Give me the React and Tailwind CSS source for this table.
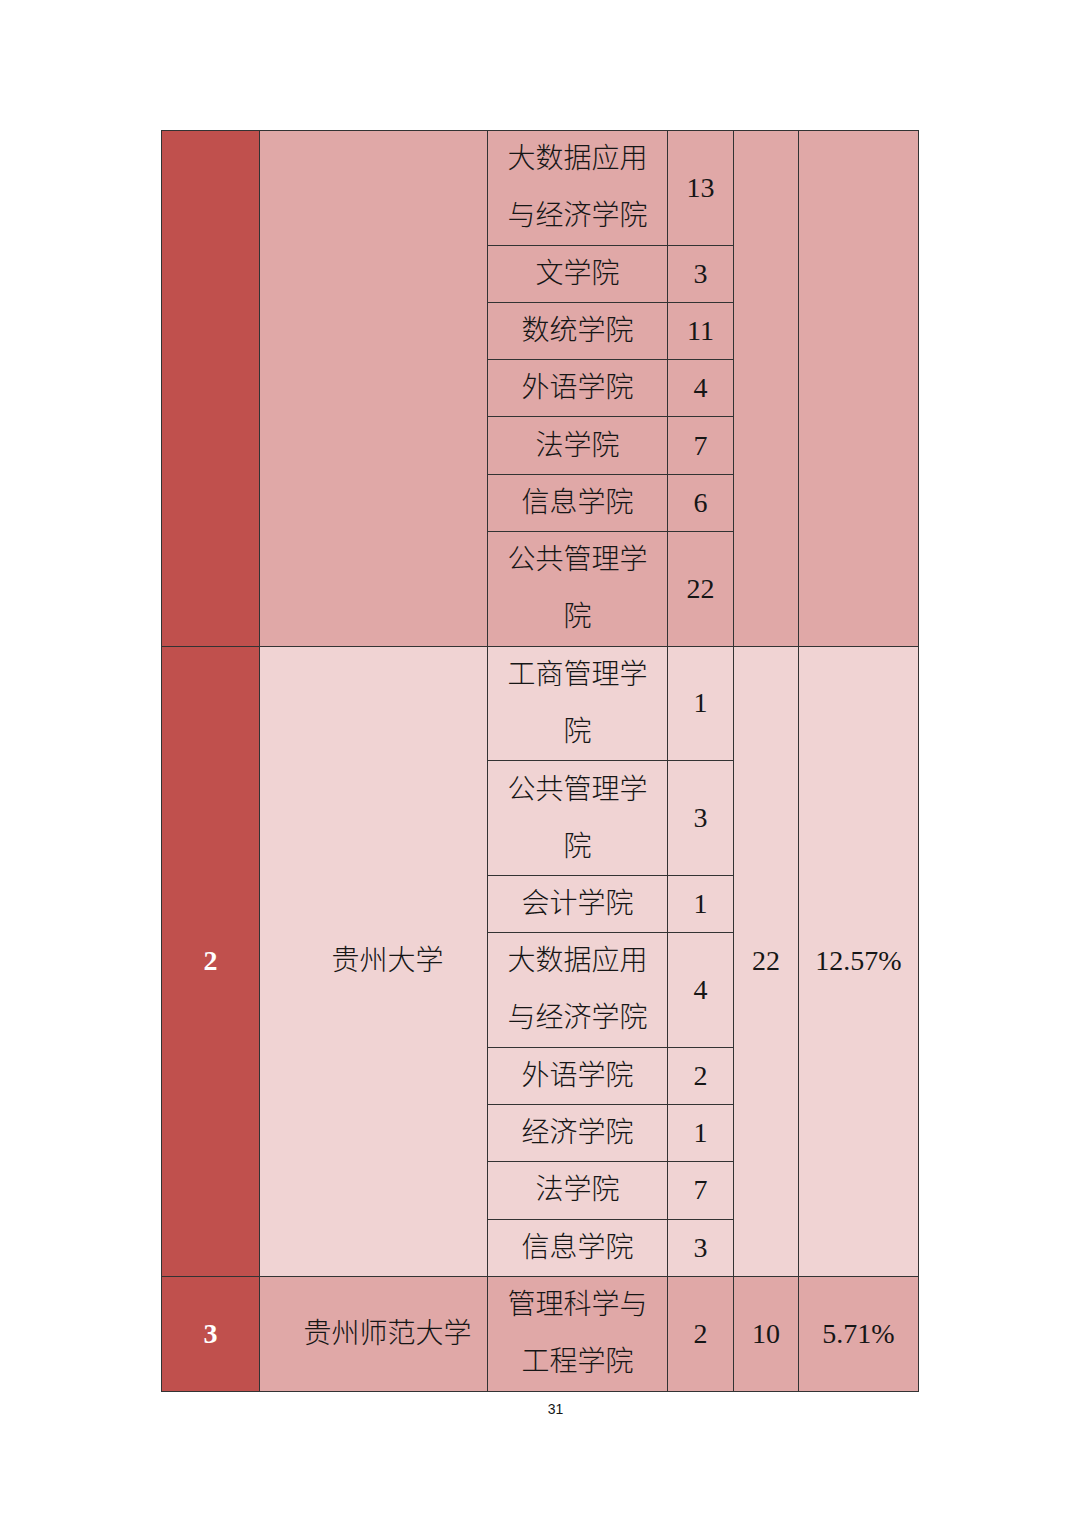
const SERIF = { fontFamily: '"Liberation Serif", "Noto Sans CJK SC", serif' };

// 表格数据：每组一所学校
const groups = [
  {
    no: "",
    school: "",
    total: "",
    ratio: "",
    bg: "bg-[#e0a8a7]",
    rows: [
      { dept: ["大数据应用", "与经济学院"], n: "13" },
      { dept: ["文学院"], n: "3" },
      { dept: ["数统学院"], n: "11" },
      { dept: ["外语学院"], n: "4" },
      { dept: ["法学院"], n: "7" },
      { dept: ["信息学院"], n: "6" },
      { dept: ["公共管理学", "院"], n: "22" },
    ],
  },
  {
    no: "2",
    school: "贵州大学",
    total: "22",
    ratio: "12.57%",
    bg: "bg-[#f0d3d3]",
    rows: [
      { dept: ["工商管理学", "院"], n: "1" },
      { dept: ["公共管理学", "院"], n: "3" },
      { dept: ["会计学院"], n: "1" },
      { dept: ["大数据应用", "与经济学院"], n: "4" },
      { dept: ["外语学院"], n: "2" },
      { dept: ["经济学院"], n: "1" },
      { dept: ["法学院"], n: "7" },
      { dept: ["信息学院"], n: "3" },
    ],
  },
  {
    no: "3",
    school: "贵州师范大学",
    total: "10",
    ratio: "5.71%",
    bg: "bg-[#e0a8a7]",
    rows: [{ dept: ["管理科学与", "工程学院"], n: "2" }],
  },
];

const cell = "border border-[#333] p-0 text-center align-middle";

function App() {
  return (
    <div className="w-[1080px] h-[1527px] bg-white text-[#161616]" style={SERIF}>
      <div className="pt-[130px] pl-[161px]">
        <table className="border-collapse table-fixed w-[757px] text-[28px] leading-[56px] font-light border border-[#6b6b6b]">
          <colgroup>
            <col className="w-[98px]" />
            <col className="w-[228px]" />
            <col className="w-[180px]" />
            <col className="w-[66px]" />
            <col className="w-[65px]" />
            <col className="w-[120px]" />
          </colgroup>
          <tbody>
            {groups.map((g, gi) =>
              g.rows.map((r, ri) => (
                <tr
                  key={gi + "-" + ri}
                  className={r.dept.length > 1 ? "h-[114.6px]" : "h-[57.3px]"}
                >
                  {ri === 0 && (
                    <>
                      <td
                        rowSpan={g.rows.length}
                        className={cell + " bg-[#c0504d] text-white font-bold leading-[40px]"}
                      >
                        {g.no}
                      </td>
                      <td
                        rowSpan={g.rows.length}
                        className={cell + " " + g.bg + " pl-[28px] leading-[40px]"}
                      >
                        {g.school}
                      </td>
                    </>
                  )}
                  <td className={cell + " " + g.bg + " leading-[54px]"}>
                    {r.dept.map((line, li) => (
                      <div key={li} className={li > 0 ? "mt-[3px]" : ""}>
                        {line}
                      </div>
                    ))}
                  </td>
                  <td className={cell + " " + g.bg + " leading-[40px]"}>{r.n}</td>
                  {ri === 0 && (
                    <>
                      <td rowSpan={g.rows.length} className={cell + " " + g.bg + " leading-[40px]"}>
                        {g.total}
                      </td>
                      <td rowSpan={g.rows.length} className={cell + " " + g.bg + " leading-[40px]"}>
                        {g.ratio}
                      </td>
                    </>
                  )}
                </tr>
              ))
            )}
          </tbody>
        </table>
        <p
          className="w-[757px] mt-[7px] text-center text-[14px] pl-[32px]"
          style={{ fontFamily: '"Liberation Sans", sans-serif' }}
        >
          31
        </p>
      </div>
    </div>
  );
}

export default App;
